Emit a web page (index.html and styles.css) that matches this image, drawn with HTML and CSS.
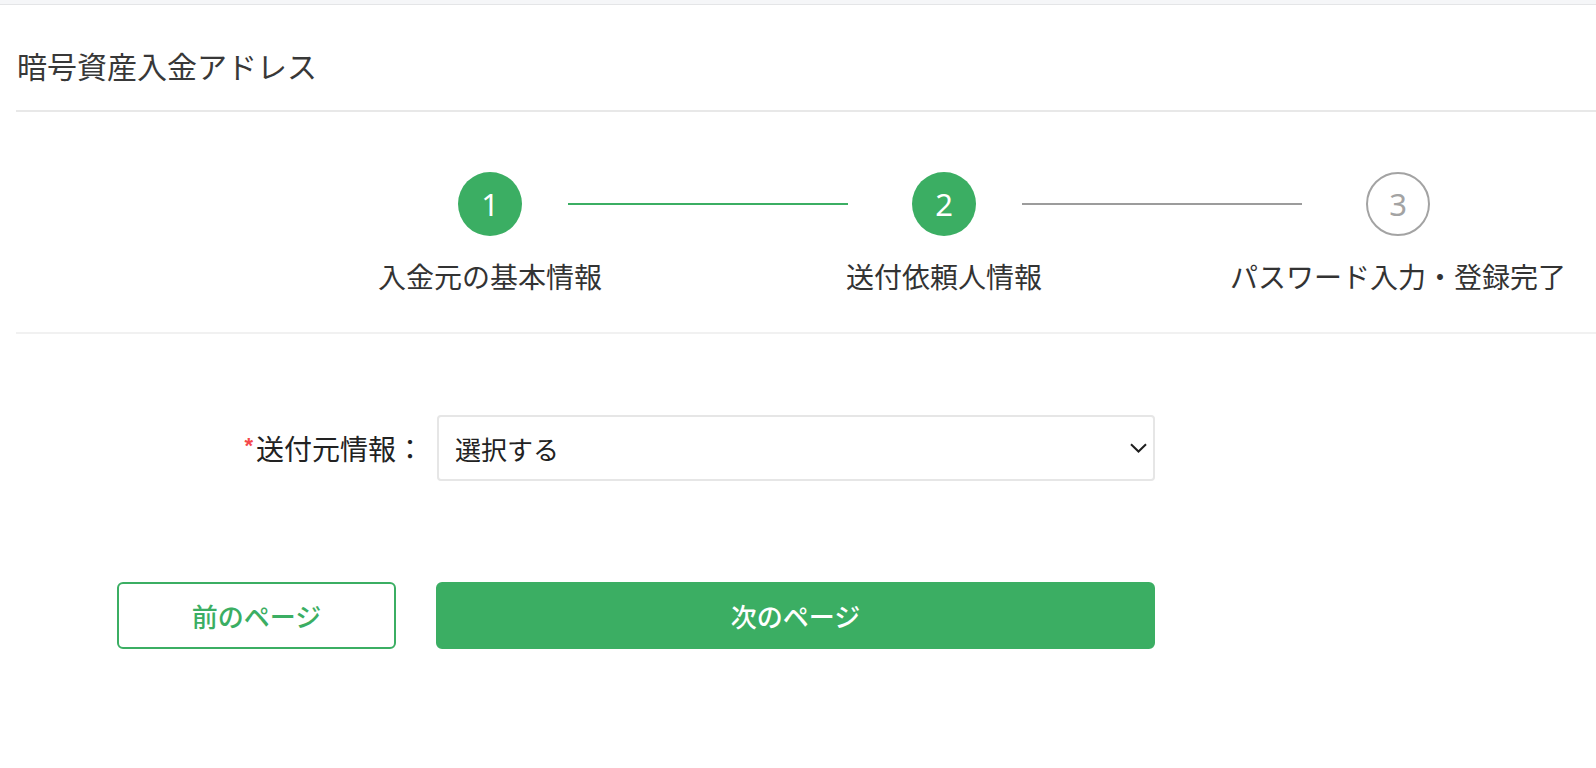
FILE: index.html
```html
<!DOCTYPE html>
<html lang="ja">
<head>
<meta charset="utf-8">
<title>暗号資産入金アドレス</title>
<link rel="stylesheet" href="styles.css">
</head>
<body>
<div class="topbar"></div>
<div class="page">
  <h1 class="title">暗号資産入金アドレス</h1>
  <section class="steps">
    <div class="step-icons">
      <span class="step-circle done">1</span>
      <span class="step-line active"></span>
      <span class="step-circle done">2</span>
      <span class="step-line"></span>
      <span class="step-circle wait">3</span>
    </div>
    <div class="step-labels">
      <span class="step-label">入金元の基本情報</span>
      <span class="step-label">送付依頼人情報</span>
      <span class="step-label">パスワード入力・登録完了</span>
    </div>
  </section>
  <form class="form">
    <div class="form-row">
      <label class="form-label"><span class="req">*</span>送付元情報：</label>
      <div class="select">
        <span class="select-text">選択する</span>
        <svg class="chevron" width="17" height="10" viewBox="0 0 17 10"><polyline points="1,1.2 8.5,8.5 16,1.2" fill="none" stroke="#1f1f1f" stroke-width="2"/></svg>
      </div>
    </div>
    <div class="form-actions">
      <button type="button" class="btn btn-outline">前のページ</button>
      <button type="button" class="btn btn-primary">次のページ</button>
    </div>
  </form>
</div>
</body>
</html>
```
FILE: styles.css
```css
html, body {
  margin: 0;
  padding: 0;
  background: #fff;
}
body {
  font-family: "Noto Sans CJK JP", "Noto Sans", sans-serif;
  color: #333;
  overflow-x: hidden;
}
.topbar {
  height: 4px;
  background: #f5f6f8;
  border-bottom: 1px solid #e4e5e7;
}
.page {
  padding-left: 16px;
  overflow: hidden;
}
.title {
  margin: 0;
  padding: 40px 0 25px 1px;
  font-size: 30px;
  line-height: 40px;
  font-weight: 400;
  color: #383838;
  border-bottom: 2px solid #e8e8e8;
}
.steps {
  padding: 60px 0 36px;
  border-bottom: 2px solid #f1f1f1;
}
.step-icons {
  display: flex;
  align-items: center;
  padding-left: 442px;
}
.step-circle {
  width: 64px;
  height: 64px;
  box-sizing: border-box;
  border-radius: 50%;
  display: flex;
  align-items: center;
  justify-content: center;
  font-family: "Noto Sans", "Liberation Sans", sans-serif;
  font-size: 31px;
  line-height: 1;
  flex: none;
}
.step-circle.done {
  background: #3bae63;
  color: #fff;
}
.step-circle.wait {
  border: 2px solid #a3a3a3;
  color: #a3a3a3;
}
.step-line {
  width: 280px;
  height: 2px;
  margin: 0 64px 0 46px;
  background: #9c9c9c;
  flex: none;
}
.step-line.active {
  background: #3bae63;
}
.step-labels {
  display: grid;
  grid-template-columns: repeat(3, 454px);
  margin-left: 247px;
  margin-top: 20px;
}
.step-label {
  text-align: center;
  font-size: 28px;
  line-height: 40px;
  color: #333;
  white-space: nowrap;
}
.form {
  margin: 81px 0 0 101px;
  padding-bottom: 60px;
}
.form-row {
  display: flex;
  align-items: center;
}
.form-label {
  width: 307px;
  margin-right: 13px;
  text-align: right;
  font-size: 28px;
  line-height: 40px;
  color: #222;
  white-space: nowrap;
}
.req {
  display: inline-block;
  vertical-align: top;
  font-family: "Liberation Sans", sans-serif;
  font-weight: 700;
  font-size: 22px;
  line-height: 36px;
  color: #f5484a;
  margin-right: 3px;
}
.select {
  width: 718px;
  height: 66px;
  box-sizing: border-box;
  border: 2px solid #e6e6e6;
  border-radius: 4px;
  display: flex;
  align-items: center;
  justify-content: space-between;
  padding: 0 6px 0 16px;
}
.select-text {
  font-size: 26px;
  color: #222;
}
.chevron {
  display: block;
}
.form-actions {
  display: flex;
  gap: 40px;
  margin-top: 101px;
}
.btn {
  height: 67px;
  box-sizing: border-box;
  border-radius: 6px;
  font-family: "Noto Sans CJK JP", "Noto Sans", sans-serif;
  font-size: 26px;
  font-weight: 500;
  cursor: pointer;
  padding: 0;
}
.btn-outline {
  width: 279px;
  background: #fff;
  border: 2px solid #3bae63;
  color: #3bae63;
}
.btn-primary {
  width: 719px;
  background: #3bae63;
  border: 2px solid #3bae63;
  color: #fff;
}
```
